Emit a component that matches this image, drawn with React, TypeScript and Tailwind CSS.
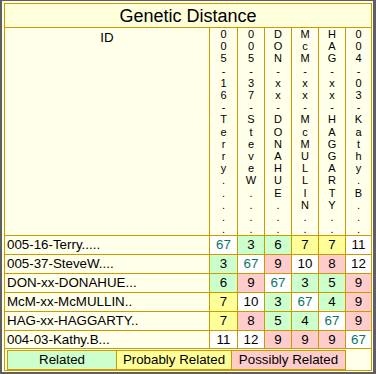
import { Fragment } from 'react'

const names = [
  '005-16-Terry.....',
  '005-37-SteveW....',
  'DON-xx-DONAHUE...',
  'McM-xx-McMULLIN..',
  'HAG-xx-HAGGARTY..',
  '004-03-Kathy.B...',
]

// g = related, y = probably related, p = possibly related, w = none
const rows: [number, string][][] = [
  [[67, 'w'], [3, 'g'], [6, 'g'], [7, 'y'], [7, 'y'], [11, 'w']],
  [[3, 'g'], [67, 'w'], [9, 'p'], [10, 'w'], [8, 'p'], [12, 'w']],
  [[6, 'g'], [9, 'p'], [67, 'w'], [3, 'g'], [5, 'g'], [9, 'p']],
  [[7, 'y'], [10, 'w'], [3, 'g'], [67, 'w'], [4, 'g'], [9, 'p']],
  [[7, 'y'], [8, 'p'], [5, 'g'], [4, 'g'], [67, 'w'], [9, 'p']],
  [[11, 'w'], [12, 'w'], [9, 'p'], [9, 'p'], [9, 'p'], [67, 'w']],
]

const cellBg: Record<string, string> = {
  g: 'bg-[#ccffcc]',
  y: 'bg-[#ffff99]',
  p: 'bg-[#ffcccc]',
  w: 'bg-white',
}

export default function App() {
  return (
    <div className="w-[376px] h-[374px] border-l-2 border-t border-r-[3px] border-b-2 border-[#5f5f5f] bg-[#ffffea] pl-[2px] pt-[2px] pr-px pb-px font-['Liberation_Sans',Arial,sans-serif] text-black">
      <div className="grid grid-cols-[204px_27px_26px_26px_26px_26px_25px] grid-rows-[23px_207px_18px_18px_18px_18px_18px_17px_21px] gap-px p-px bg-[#cc9900] w-[368px] h-[368px]">
        {/* title */}
        <div className="col-span-7 bg-[#ffffdc] flex items-center justify-center text-[18px] leading-none">
          Genetic Distance
        </div>

        {/* header row */}
        <div className="bg-[#ffffea] text-center text-[13.33px] leading-[15px] pt-[2px]">ID</div>
        {names.map((n) => (
          <div key={n} className="bg-[#ffffea] flex flex-col items-center text-[11px] leading-[12.2px]">
            {n.split('').map((ch, i) => (
              <div key={i}>{ch}</div>
            ))}
          </div>
        ))}

        {/* data rows */}
        {rows.map((row, r) => (
          <Fragment key={r}>
            <div className="bg-[#ffffea] flex items-center pl-[2px] text-[13.33px] leading-none">
              {names[r]}
            </div>
            {row.map(([v, c], i) => (
              <div
                key={i}
                className={`${cellBg[c]} flex items-center justify-center text-[13.33px] leading-none ${v === 67 ? 'text-[#0b7363]' : ''}`}
              >
                {v}
              </div>
            ))}
          </Fragment>
        ))}

        {/* legend */}
        <div className="col-span-7 bg-[#ffffea] pl-[2px] pt-px">
          <div className="flex w-fit h-[20px] border border-[#cc9900] bg-[#cc9900] gap-px text-[13.33px] leading-none">
            <div className="w-[108px] bg-[#ccffcc] flex items-center justify-center">Related</div>
            <div className="w-[114px] bg-[#ffff99] flex items-center justify-center">Probably Related</div>
            <div className="w-[113px] bg-[#ffcccc] flex items-center justify-center">Possibly Related</div>
          </div>
        </div>
      </div>
    </div>
  )
}
